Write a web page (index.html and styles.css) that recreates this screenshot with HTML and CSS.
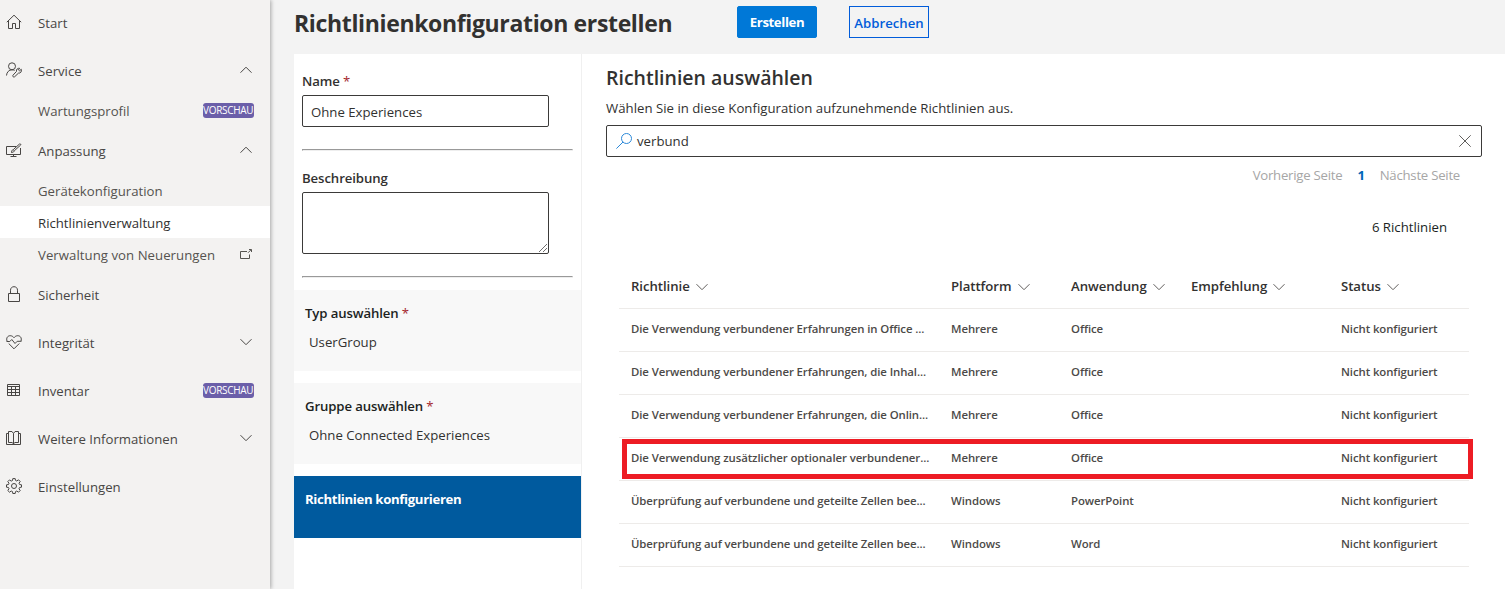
FILE: index.html
```html
<!DOCTYPE html>
<html lang="de">
<head>
<meta charset="utf-8">
<title>Richtlinienkonfiguration erstellen</title>
<link rel="stylesheet" href="styles.css">
</head>
<body>
<svg class="defs" width="0" height="0" aria-hidden="true">
  <symbol id="down" viewBox="0 0 12 12"><path d="M.5 3.200 6 8.700l5.500-5.500"/></symbol>
  <symbol id="up" viewBox="0 0 12 12"><path d="M.5 8.700 6 3.200l5.500 5.500"/></symbol>
</svg>
<div class="app">
  <nav class="sidebar">
    <a class="item"><svg class="icon" viewBox="0 0 16 16"><path d="M.8 8.200 8 1.200l7.200 7M2.500 6.800v7.700h4v-5h3v5h4V6.800"/></svg><span>Start</span></a>
    <a class="item"><svg class="icon" viewBox="0 0 16 16"><circle cx="6" cy="4.300" r="3.500"/><path d="M.5 13.500c.2-3.300 2.500-5.700 5.500-5.700 1 0 1.800.2 2.500.7M15.300 7.300l-1.900 1.500-1-.9 1.300-1.600c-2-.4-3.700 1.100-3.200 3.100l-3.600 3.900c-.7 1 .7 2.300 1.700 1.500l3.900-3.700c2 .4 3.400-1.500 2.800-3.800z"/></svg><span>Service</span><svg class="chev"><use href="#up"/></svg></a>
    <a class="item sub"><span>Wartungsprofil</span><b class="badge">VORSCHAU</b></a>
    <a class="item"><svg class="icon" viewBox="0 0 16 16"><path d="M10 4.500H.5v8h14V6M7.500 12.500v2M4.500 14.500h6M5 10.200c1-.3.700-1.700 1.500-2.300.8-.6 2 .3 1.600 1.400-.4 1-1.900 1.300-3.100.9zM7.300 7.600l6.200-5.600c.7-.6 1.700.3 1.100 1.100L8.500 8.600"/></svg><span>Anpassung</span><svg class="chev"><use href="#up"/></svg></a>
    <a class="item sub"><span>Gerätekonfiguration</span></a>
    <a class="item sub active"><span>Richtlinienverwaltung</span></a>
    <a class="item sub"><span class="news">Verwaltung von Neuerungen</span><svg class="chev ext" viewBox="0 0 12 12"><path d="M7 3.500H.5v7h9V6.500M8 4.800l3-3M9 1.500h2.500V4"/></svg></a>
    <a class="item"><svg class="icon" viewBox="0 0 16 16"><path d="M2.500 7.500h11v8h-11zM4.500 7.500V4.200C4.500 2 6 .7 8 .7s3.500 1.300 3.500 3.500v3.300"/></svg><span>Sicherheit</span></a>
    <a class="item"><svg class="icon" viewBox="0 0 16 16"><path d="M1 7C0 4 1.700 1.700 4.200 1.700c1.600 0 2.900.8 3.800 2 .9-1.200 2.200-2 3.800-2C14.300 1.700 16 4 15 7M2.700 9.500 8 14.800l5.300-5.300M.5 7.500h3.300l2-2 3.200 4 2.200-2.200h4.300"/></svg><span>Integrität</span><svg class="chev"><use href="#down"/></svg></a>
    <a class="item"><svg class="icon" viewBox="0 0 16 16"><path d="M1.500 2.500h12v11h-12zM1.500 4.500h12M1.500 7.500h12M1.500 10.500h12M5.500 4v9.500M9.500 4v9.500"/></svg><span>Inventar</span><b class="badge">VORSCHAU</b></a>
    <a class="item"><svg class="icon" viewBox="0 0 16 16"><path d="M7.500 14.500V3.500L6 1.500H2.500v11h3.800l1.200 1.500 1.200-1.500h3.800v-11H9L7.500 3.500M2.500 3.500h-2v11h14v-11h-2"/></svg><span>Weitere Informationen</span><svg class="chev"><use href="#down"/></svg></a>
    <a class="item"><svg class="icon" viewBox="0 0 16 16"><circle cx="8" cy="8" r="2.500"/><path d="m6.800.6-.3 1.900-1.300.6-1.700-1.200-1.700 1.700L3 5.200l-.5 1.300-2 .3v2.400l2 .3.500 1.300-1.200 1.700 1.700 1.700 1.700-1.200 1.300.6.300 1.900h2.400l.3-1.900 1.300-.6 1.700 1.200 1.700-1.700-1.200-1.700.6-1.300 1.900-.3V6.800l-1.900-.3-.6-1.300 1.200-1.700-1.700-1.700-1.700 1.200-1.300-.6L9.200.6z"/></svg><span>Einstellungen</span></a>
  </nav>
  <main class="main">
    <header class="head">
      <h1>Richtlinienkonfiguration erstellen</h1>
      <button class="btn primary">Erstellen</button>
      <button class="btn plain">Abbrechen</button>
    </header>
    <div class="panel">
      <section class="steps">
        <div class="fields">
          <label>Name <i>*</i></label>
          <div class="input">Ohne Experiences</div>
          <hr>
          <label>Beschreibung</label>
          <div class="input area"><svg class="grip" viewBox="0 0 10 10"><path d="M1 9 9 1M5 9l4-4"/></svg></div>
          <hr>
        </div>
        <div class="step"><h3>Typ auswählen <i>*</i></h3><p>UserGroup</p></div>
        <div class="step"><h3>Gruppe auswählen <i>*</i></h3><p>Ohne Connected Experiences</p></div>
        <div class="step current"><h3>Richtlinien konfigurieren</h3></div>
      </section>
      <section class="content">
        <h2>Richtlinien auswählen</h2>
        <p class="intro">Wählen Sie in diese Konfiguration aufzunehmende Richtlinien aus.</p>
        <div class="search">
          <svg class="glass" viewBox="0 0 16 16"><circle cx="10.500" cy="5.500" r="5"/><path d="M7 9 .4 15.600"/></svg>
          <span>verbund</span>
          <svg class="clear" viewBox="0 0 12 12"><path d="m.3.3 11.400 11.400M11.700.3.3 11.700"/></svg>
        </div>
        <div class="pager"><span>Vorherige Seite</span><b>1</b><span>Nächste Seite</span></div>
        <div class="count">6 Richtlinien</div>
        <div class="table">
          <div class="row th"><span>Richtlinie<svg><use href="#down"/></svg></span><span>Plattform<svg><use href="#down"/></svg></span><span>Anwendung<svg><use href="#down"/></svg></span><span>Empfehlung<svg><use href="#down"/></svg></span><span>Status<svg><use href="#down"/></svg></span></div>
          <div class="row"><span>Die Verwendung verbundener Erfahrungen in Office ...</span><span>Mehrere</span><span>Office</span><span></span><span>Nicht konfiguriert</span></div>
          <div class="row"><span>Die Verwendung verbundener Erfahrungen, die Inhal...</span><span>Mehrere</span><span>Office</span><span></span><span>Nicht konfiguriert</span></div>
          <div class="row"><span>Die Verwendung verbundener Erfahrungen, die Onlin...</span><span>Mehrere</span><span>Office</span><span></span><span>Nicht konfiguriert</span></div>
          <div class="row marked"><span>Die Verwendung zusätzlicher optionaler verbundener...</span><span>Mehrere</span><span>Office</span><span></span><span>Nicht konfiguriert</span></div>
          <div class="row"><span>Überprüfung auf verbundene und geteilte Zellen bee...</span><span>Windows</span><span>PowerPoint</span><span></span><span>Nicht konfiguriert</span></div>
          <div class="row"><span>Überprüfung auf verbundene und geteilte Zellen bee...</span><span>Windows</span><span>Word</span><span></span><span>Nicht konfiguriert</span></div>
        </div>
      </section>
    </div>
  </main>
</div>
</body>
</html>
```
FILE: styles.css
```css
*, *::after { box-sizing: border-box; margin: 0; padding: 0; }
body { font: 13.2px/20px "Open Sans", "Noto Sans", sans-serif; color: #323130; background: #f3f3f3; overflow: hidden; }
svg { fill: none; stroke: currentColor; stroke-width: 1; flex: none; }
i { font-style: normal; font-weight: 400; color: #a4262c; }
.defs { position: absolute; }
.app { display: flex; height: 589px; }

.sidebar { width: 270px; flex: none; background: #f3f2f1; box-shadow: 1px 0 4px rgba(0,0,0,.32); z-index: 1; }
.item { display: flex; align-items: center; height: 48px; padding: 2px 16px 0 6px; color: #484644; white-space: nowrap; }
.item:first-child { height: 46px; padding-top: 0; }
.item .icon { width: 16px; height: 16px; margin: -2px 16px 0 0; }
.item.sub { height: 32px; padding-left: 38px; color: #55534f; }
.item.active { background: #fff; color: #323130; }
.news { letter-spacing: .04px; }
.chev { width: 12px; height: 12px; margin: -2px 2px 0 auto; }
.badge { margin: -1px 0 0 auto; width: 51px; height: 15px; border-radius: 3px; background: #6b5fa9; color: #fff; font: 400 10px/15px "Open Sans", sans-serif; letter-spacing: -.3px; overflow: hidden; }

.main { flex: 1; min-width: 0; padding-left: 24px; display: flex; flex-direction: column; }
.head { height: 54px; display: flex; align-items: flex-start; padding-top: 6px; }
h1 { width: 443px; font-size: 23px; line-height: 35px; font-weight: 700; letter-spacing: -.35px; white-space: nowrap; }
.btn { width: 80px; height: 32px; font: 600 13.200px/28px "Open Sans", sans-serif; border: 1px solid #0078d7; white-space: nowrap; }
.primary { background: #0078d7; color: #fff; border-radius: 2px; font-weight: 700; letter-spacing: -.4px; margin-right: 32px; }
.plain { background: transparent; border-color: #015cda; color: #015cda; padding-top: 1px; }

.panel { flex: 1; display: flex; background: #fff; }
.steps { width: 288px; border-right: 1px solid #f0f0f0; }
.fields { height: 236px; padding: 17px 8px 0; }
label { display: block; font-weight: 600; line-height: 20px; letter-spacing: -.1px; }
.input { width: 247px; height: 32px; border: 1px solid #3b3a39; border-radius: 2px; padding: 0 8px; line-height: 32px; margin-top: 4px; }
.area { height: 62px; display: flex; justify-content: flex-end; align-items: flex-end; padding: 0; }
.grip { width: 10px; height: 10px; stroke-width: .7; }
hr { height: 2px; border: 1px solid #999; border-bottom-color: #eee; border-right-color: #eee; margin: 22px 0 17px; }
.step { height: 81px; margin-bottom: 12px; padding: 13px 11px; background: #f8f8f8; }
h3 { font-size: 13.2px; line-height: 20px; font-weight: 600; letter-spacing: -.12px; color: #201f1e; }
.step p { padding: 9px 0 0 4px; }
.current { height: 62px; background: #005a9e; }
.current h3 { color: #fff; font-weight: 700; letter-spacing: -.35px; }

.content { flex: 1; padding: 10px 23px 0 24px; }
h2 { font-size: 19.5px; line-height: 28px; font-weight: 600; }
.intro { padding-top: 6px; letter-spacing: .015px; }
.search { height: 32px; margin-top: 7px; padding: 0 10px 0 9px; display: flex; align-items: center; border: 1px solid #3b3a39; border-radius: 2px; }
.glass { width: 16px; height: 16px; color: #2b88d8; margin-right: 5px; }
.clear { width: 12px; height: 12px; margin-left: auto; color: #605e5c; }
.pager { display: flex; justify-content: flex-end; gap: 15px; margin: 8px 22px 0 0; color: #a6a6a6; letter-spacing: -.25px; }
.pager b { color: #0067b8; }
.count { margin: 32px 35px 0 0; text-align: right; color: #201f1e; }
.table { margin: 28px 13px 0; }
.row { position: relative; display: grid; grid-template-columns: 320px 120px 120px 150px 1fr; height: 43px; padding: 0 12px; align-items: center; border-bottom: 1px solid #edebe9; font-size: 11.4px; font-weight: 600; letter-spacing: -.09px; color: #4c4a48; white-space: nowrap; }
.row span { padding-bottom: 2px; }
.th { height: 44px; font-size: 13.2px; letter-spacing: -.05px; color: #323130; }
.th span { padding: 0 0 1px; }
.th svg { width: 12px; height: 12px; margin-left: 6px; vertical-align: -2px; color: #605e5c; }
.marked::after { content: ""; position: absolute; left: 3px; top: 1px; width: 851px; height: 40px; border: 5px solid #ed1c24; }
```
